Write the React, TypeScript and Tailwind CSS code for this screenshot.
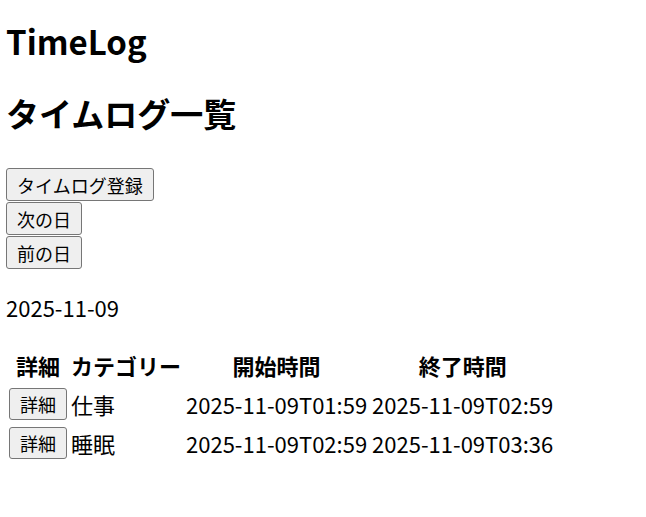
const font = { fontFamily: '"Noto Sans CJK JP", "Noto Sans", sans-serif' };

const logs = [
  { id: 1, category: '仕事', start: '2025-11-09T01:59', end: '2025-11-09T02:59' },
  { id: 2, category: '睡眠', start: '2025-11-09T02:59', end: '2025-11-09T03:36' },
];

// デフォルトのボタン見た目
const btn = 'bg-[#efefef] border border-[#767676] rounded-[3px] text-black text-[18px] leading-[normal] hover:bg-[#e5e5e5]';

export default function App() {
  return (
    <div style={font} className="min-h-screen bg-white text-black px-[6px] pt-[17px]">
      <h1 className="text-[33px] font-bold leading-[normal]">TimeLog</h1>
      <h2 className="mt-[24px] text-[33px] font-bold leading-[normal]">タイムログ一覧</h2>

      <div className="mt-[31px] flex flex-col items-start gap-[1px]">
        <button className={`${btn} h-[33px] px-[10px]`}>タイムログ登録</button>
        <button className={`${btn} h-[33px] px-[10px]`}>次の日</button>
        <button className={`${btn} h-[33px] px-[10px]`}>前の日</button>
      </div>

      <p className="mt-[22px] text-[22px] leading-[normal]">2025-11-09</p>

      <table className="mt-[23px] border-separate border-spacing-[2px] text-[22px] leading-[normal]">
        <thead>
          <tr>
            <th className="p-[1px] pb-[2px] font-bold text-center">詳細</th>
            <th className="p-[1px] pb-[2px] pr-[2px] font-bold text-center">カテゴリー</th>
            <th className="p-[1px] pb-[2px] pr-[2px] font-bold text-center">開始時間</th>
            <th className="p-[1px] pb-[2px] font-bold text-center">終了時間</th>
          </tr>
        </thead>
        <tbody>
          {logs.map((log) => (
            <tr key={log.id}>
              <td className="px-[1px] pt-[3px] pb-[2px]">
                <button className={`${btn} px-[10px] py-[2px] block`}>詳細</button>
              </td>
              <td className="p-[1px] pr-[2px]">{log.category}</td>
              <td className="p-[1px] pr-[2px]">{log.start}</td>
              <td className="p-[1px]">{log.end}</td>
            </tr>
          ))}
        </tbody>
      </table>
    </div>
  );
}
